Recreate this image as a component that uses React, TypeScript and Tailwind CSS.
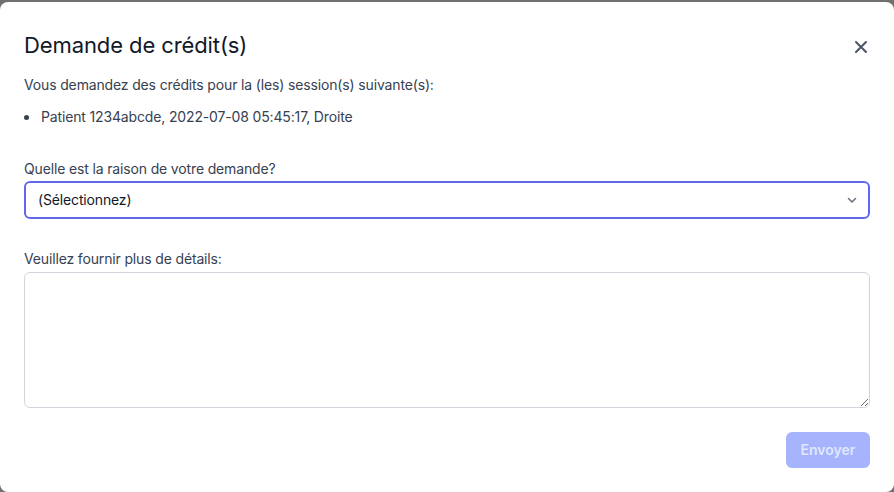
import React, { useState } from 'react';

const reasons = ['(Sélectionnez)', 'Session interrompue', 'Erreur technique', 'Autre'];

export default function App() {
  const [reason, setReason] = useState(reasons[0]);
  const [details, setDetails] = useState('');

  return (
    <div className="h-[492px] w-full bg-[#707070] pt-[2px] font-['Inter',sans-serif]">
      <div className="h-[490px] rounded-lg bg-white px-6 pt-[28px]">
        <div className="flex items-center justify-between">
          <h2 className="text-[22px] leading-[30px] tracking-[-0.1px] text-[#111827]">Demande de crédit(s)</h2>
          <button className="mr-[2px] mt-[4px] text-[#4b5563]">
            <svg width="14" height="14" viewBox="0 0 14 14" fill="none" stroke="currentColor" strokeWidth="2" strokeLinecap="round">
              <path d="M2 2l10 10M12 2L2 12" />
            </svg>
          </button>
        </div>

        <div className="text-sm leading-5 tracking-[-0.15px] text-[#374151]">
          <p className="mt-[15px]">Vous demandez des crédits pour la (les) session(s) suivante(s):</p>
          <ul className="mt-3 list-disc pl-4">
            <li className="pl-[1px]">Patient 1234abcde, 2022-07-08 05:45:17, Droite</li>
          </ul>

          <label className="mt-[32px] block">Quelle est la raison de votre demande?</label>
          <div className="relative mt-[2px]">
            <select
              value={reason}
              onChange={e => setReason(e.target.value)}
              className="h-[38px] w-full appearance-none rounded-md border-2 border-[#6366f1] bg-white pl-[12px] text-sm text-[#111827] outline-none"
            >
              {reasons.map(r => (
                <option key={r}>{r}</option>
              ))}
            </select>
            <svg className="pointer-events-none absolute right-[12px] top-[13px]" width="12" height="12" viewBox="0 0 12 12" fill="none" stroke="#6b7280" strokeWidth="1.6" strokeLinecap="round" strokeLinejoin="round">
              <path d="M2.5 4.5L6 8l3.5-3.5" />
            </svg>
          </div>

          <label className="mt-[30px] block">Veuillez fournir plus de détails:</label>
          <textarea
            value={details}
            onChange={e => setDetails(e.target.value)}
            className="mt-[3px] block h-[136px] w-full rounded-md border border-[#d1d5db] px-3 py-2 text-sm outline-none"
          />
        </div>

        <div className="mt-[24px] flex justify-end">
          <button disabled className="h-[36px] w-[84px] rounded-md bg-[#a5b4fc] text-sm font-semibold text-[#e0e7ff]">
            Envoyer
          </button>
        </div>
      </div>
    </div>
  );
}
